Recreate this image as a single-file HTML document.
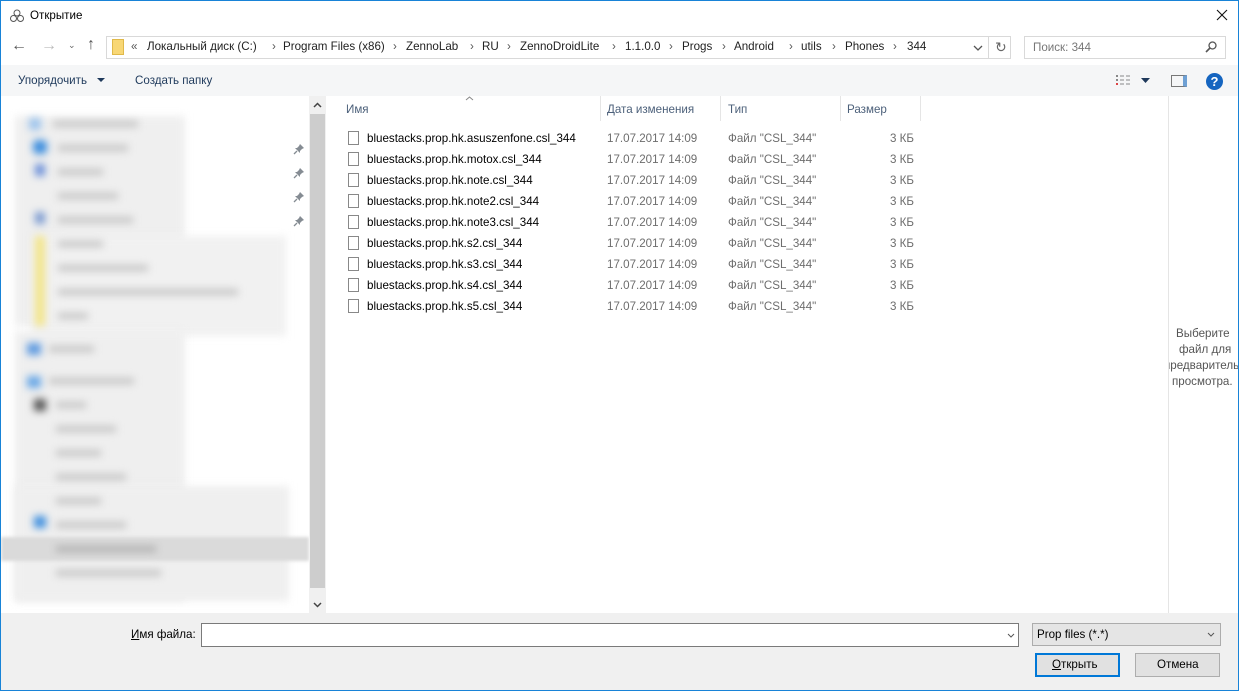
<!DOCTYPE html>
<html><head><meta charset="utf-8"><style>
*{box-sizing:border-box;margin:0;padding:0}
body{width:1239px;height:691px;overflow:hidden;background:#fff;font-family:"Liberation Sans",sans-serif;font-size:11.6px;color:#000;position:relative}
.abs{position:absolute}
.win{position:absolute;left:0;top:0;width:1239px;height:691px;border:1px solid #1883d7}
.t{white-space:nowrap}
.blur{filter:blur(4px)}
.row{position:absolute;left:0;height:21px;width:100%}
.row span{position:absolute;top:4px;white-space:nowrap}
.fi{position:absolute;left:348px;top:3px;width:11px;height:14px;border:1px solid #888;background:#fff}
.g{color:#6d6d6d}
.ad{position:absolute;top:40px;white-space:nowrap;color:#222}
.sep{position:absolute;top:40px;color:#555}
</style></head><body>
<div class="win"></div>
<svg class="abs" style="left:9px;top:8px" width="16" height="16" viewBox="0 0 16 16"><circle cx="8" cy="5" r="3" fill="none" stroke="#555"/><circle cx="4.5" cy="10.5" r="3" fill="none" stroke="#555"/><circle cx="11.5" cy="10.5" r="3" fill="none" stroke="#555"/></svg>
<div class="abs t" style="left:30px;top:9px">Открытие</div>
<svg class="abs" style="left:1216px;top:9px" width="12" height="12"><path d="M1 1L11 11M11 1L1 11" stroke="#111" stroke-width="1.1"/></svg>
<div class="abs" style="left:11px;top:37px;font-size:16px;color:#555">←</div>
<div class="abs" style="left:41px;top:37px;font-size:16px;color:#bbb">→</div>
<div class="abs" style="left:68px;top:40px;font-size:9px;color:#666">⌄</div>
<div class="abs" style="left:87px;top:36px;font-size:16px;color:#555">↑</div>
<div class="abs" style="left:106px;top:36px;width:905px;height:23px;border:1px solid #d9d9d9"></div>
<div class="abs" style="left:988px;top:37px;width:1px;height:21px;background:#d9d9d9"></div>
<div class="abs" style="left:112px;top:39px;width:12px;height:16px;background:#f8d775;border:1px solid #e0b94a"></div>
<div class="sep" style="left:131px">«</div>
<div class="ad" style="left:147px">Локальный диск (C:)</div><div class="sep" style="left:272px">›</div>
<div class="ad" style="left:283px">Program Files (x86)</div><div class="sep" style="left:393px">›</div>
<div class="ad" style="left:406px">ZennoLab</div><div class="sep" style="left:470px">›</div>
<div class="ad" style="left:482px">RU</div><div class="sep" style="left:507px">›</div>
<div class="ad" style="left:520px">ZennoDroidLite</div><div class="sep" style="left:612px">›</div>
<div class="ad" style="left:625px">1.1.0.0</div><div class="sep" style="left:669px">›</div>
<div class="ad" style="left:682px">Progs</div><div class="sep" style="left:722px">›</div>
<div class="ad" style="left:734px">Android</div><div class="sep" style="left:789px">›</div>
<div class="ad" style="left:801px">utils</div><div class="sep" style="left:832px">›</div>
<div class="ad" style="left:845px">Phones</div><div class="sep" style="left:893px">›</div>
<div class="ad" style="left:907px">344</div>
<svg class="abs" style="left:973px;top:45px" width="10" height="6"><path d="M1 1L5 5L9 1" fill="none" stroke="#555" stroke-width="1.3"/></svg>
<div class="abs" style="left:995px;top:39px;font-size:14px;color:#666">↻</div>
<div class="abs" style="left:1024px;top:36px;width:202px;height:23px;border:1px solid #d9d9d9"></div>
<div class="abs t" style="left:1033px;top:41px;color:#777">Поиск: 344</div>
<svg class="abs" style="left:1205px;top:41px" width="12" height="12"><circle cx="7.5" cy="4.5" r="3.5" fill="none" stroke="#555" stroke-width="1.3"/><path d="M5 7L1 11" stroke="#555" stroke-width="1.6"/></svg>
<div class="abs" style="left:1px;top:65px;width:1237px;height:31px;background:#f5f6f7"></div>
<div class="abs t" style="left:18px;top:74px;color:#1e395b">Упорядочить</div>
<svg class="abs" style="left:97px;top:78px" width="8" height="5"><path d="M0 0H8L4 4Z" fill="#1e395b"/></svg>
<div class="abs t" style="left:135px;top:74px;color:#1e395b">Создать папку</div>
<svg class="abs" style="left:1116px;top:74px" width="18" height="13"><g fill="#888"><rect x="0" y="1" width="2" height="2"/><rect x="0" y="5" width="2" height="2"/><rect x="0" y="9" width="2" height="2" fill="#d44"/><rect x="4" y="1.5" width="4" height="1"/><rect x="10" y="1.5" width="4" height="1"/><rect x="4" y="5.5" width="4" height="1"/><rect x="10" y="5.5" width="4" height="1"/><rect x="4" y="9.5" width="4" height="1"/><rect x="10" y="9.5" width="4" height="1"/></g></svg>
<svg class="abs" style="left:1141px;top:78px" width="9" height="5"><path d="M0 0H9L4.5 5Z" fill="#1e395b"/></svg>
<div class="abs" style="left:1171px;top:75px;width:16px;height:12px;border:1px solid #777;border-right:4px solid #6ea0d4"></div>
<div class="abs" style="left:1206px;top:73px;width:17px;height:17px;border-radius:50%;background:#1565c0;color:#fff;font-weight:bold;font-size:13px;text-align:center;line-height:17px">?</div>
<!-- sidebar -->
<div class="abs" style="left:1px;top:96px;width:308px;height:517px;overflow:hidden">
 <div class="abs blur" style="left:14px;top:20px;width:170px;height:210px;background:#efefef"></div>
 <div class="abs blur" style="left:30px;top:140px;width:255px;height:100px;background:#f1f1f1"></div>
 <div class="abs blur" style="left:14px;top:235px;width:170px;height:270px;background:#efefef"></div>
 <div class="abs blur" style="left:14px;top:390px;width:274px;height:115px;background:#efefef"></div>
 <div class="abs" style="left:0;top:441px;width:308px;height:24px;background:#dadada;filter:blur(1.5px)"></div>
 <div class="abs blur" style="left:28px;top:22px;width:12px;height:12px;background:#9cc3ec"></div>
 <div class="abs blur" style="left:32px;top:44px;width:14px;height:14px;background:#3d8ede;border-radius:4px"></div>
 <div class="abs blur" style="left:34px;top:68px;width:10px;height:12px;background:#6a8fd8"></div>
 <div class="abs blur" style="left:34px;top:116px;width:10px;height:12px;background:#7a9ad0"></div>
 <div class="abs blur" style="left:34px;top:140px;width:10px;height:90px;background:#f3e58a"></div>
 <div class="abs blur" style="left:26px;top:247px;width:14px;height:12px;background:#5e9ae0"></div>
 <div class="abs blur" style="left:26px;top:280px;width:14px;height:12px;background:#6aa8e6"></div>
 <div class="abs blur" style="left:33px;top:303px;width:12px;height:12px;background:#555"></div>
 <div class="abs blur" style="left:33px;top:420px;width:12px;height:12px;background:#3d8ede"></div>
 <div class="abs blur" style="left:52px;top:25px;width:85px;height:6px;background:#c4c4c4"></div>
 <div class="abs blur" style="left:57px;top:49px;width:70px;height:6px;background:#c4c4c4"></div>
 <div class="abs blur" style="left:57px;top:73px;width:45px;height:6px;background:#c4c4c4"></div>
 <div class="abs blur" style="left:57px;top:97px;width:60px;height:6px;background:#c4c4c4"></div>
 <div class="abs blur" style="left:57px;top:121px;width:75px;height:6px;background:#c4c4c4"></div>
 <div class="abs blur" style="left:57px;top:145px;width:45px;height:6px;background:#c4c4c4"></div>
 <div class="abs blur" style="left:57px;top:169px;width:90px;height:6px;background:#c4c4c4"></div>
 <div class="abs blur" style="left:57px;top:193px;width:180px;height:6px;background:#c4c4c4"></div>
 <div class="abs blur" style="left:57px;top:217px;width:30px;height:6px;background:#c4c4c4"></div>
 <div class="abs blur" style="left:48px;top:250px;width:45px;height:6px;background:#c4c4c4"></div>
 <div class="abs blur" style="left:48px;top:282px;width:85px;height:6px;background:#c4c4c4"></div>
 <div class="abs blur" style="left:55px;top:306px;width:30px;height:6px;background:#c4c4c4"></div>
 <div class="abs blur" style="left:55px;top:330px;width:60px;height:6px;background:#c4c4c4"></div>
 <div class="abs blur" style="left:55px;top:354px;width:45px;height:6px;background:#c4c4c4"></div>
 <div class="abs blur" style="left:55px;top:378px;width:70px;height:6px;background:#c4c4c4"></div>
 <div class="abs blur" style="left:55px;top:402px;width:45px;height:6px;background:#c4c4c4"></div>
 <div class="abs blur" style="left:55px;top:426px;width:70px;height:6px;background:#c4c4c4"></div>
 <div class="abs blur" style="left:55px;top:450px;width:100px;height:6px;background:#b0b0b0"></div>
 <div class="abs blur" style="left:55px;top:474px;width:105px;height:6px;background:#c4c4c4"></div>
</div>
<svg class="abs" style="left:293px;top:143px" width="12" height="12"><path d="M7 1L11 5L9 6L7 8L7 10L2 5L4 5L6 3Z" fill="#858c93"/><path d="M4 8L1 11" stroke="#858c93" stroke-width="1.3"/></svg>
<svg class="abs" style="left:293px;top:167px" width="12" height="12"><path d="M7 1L11 5L9 6L7 8L7 10L2 5L4 5L6 3Z" fill="#858c93"/><path d="M4 8L1 11" stroke="#858c93" stroke-width="1.3"/></svg>
<svg class="abs" style="left:293px;top:191px" width="12" height="12"><path d="M7 1L11 5L9 6L7 8L7 10L2 5L4 5L6 3Z" fill="#858c93"/><path d="M4 8L1 11" stroke="#858c93" stroke-width="1.3"/></svg>
<svg class="abs" style="left:293px;top:215px" width="12" height="12"><path d="M7 1L11 5L9 6L7 8L7 10L2 5L4 5L6 3Z" fill="#858c93"/><path d="M4 8L1 11" stroke="#858c93" stroke-width="1.3"/></svg>
<!-- scrollbar -->
<div class="abs" style="left:309px;top:96px;width:17px;height:517px;background:#f0f0f0"></div>
<div class="abs" style="left:310px;top:114px;width:15px;height:474px;background:#cdcdcd"></div>
<svg class="abs" style="left:313px;top:102px" width="9" height="6"><path d="M1 5L4.5 1.5L8 5" fill="none" stroke="#444" stroke-width="1.5"/></svg>
<svg class="abs" style="left:313px;top:602px" width="9" height="6"><path d="M1 1L4.5 4.5L8 1" fill="none" stroke="#444" stroke-width="1.5"/></svg>
<!-- header -->
<svg class="abs" style="left:465px;top:96px" width="9" height="5"><path d="M1 4L4.5 1L8 4" fill="none" stroke="#888"/></svg>
<div class="abs t" style="left:346px;top:103px;color:#4c607a">Имя</div>
<div class="abs" style="left:600px;top:96px;width:1px;height:25px;background:#e5e5e5"></div>
<div class="abs t" style="left:607px;top:103px;color:#4c607a">Дата изменения</div>
<div class="abs" style="left:720px;top:96px;width:1px;height:25px;background:#e5e5e5"></div>
<div class="abs t" style="left:728px;top:103px;color:#4c607a">Тип</div>
<div class="abs" style="left:840px;top:96px;width:1px;height:25px;background:#e5e5e5"></div>
<div class="abs t" style="left:847px;top:103px;color:#4c607a">Размер</div>
<div class="abs" style="left:920px;top:96px;width:1px;height:25px;background:#e5e5e5"></div>
<div class="abs" style="left:1168px;top:96px;width:1px;height:517px;background:#e5e5e5"></div>
<div class="abs" style="left:0;top:128px;width:1239px">
<div class="row" style="top:0"><div class="fi"></div><span style="left:367px">bluestacks.prop.hk.asuszenfone.csl_344</span><span class="g" style="left:607px">17.07.2017 14:09</span><span class="g" style="left:728px">Файл "CSL_344"</span><span class="g" style="left:890px">3 КБ</span></div>
<div class="row" style="top:21px"><div class="fi"></div><span style="left:367px">bluestacks.prop.hk.motox.csl_344</span><span class="g" style="left:607px">17.07.2017 14:09</span><span class="g" style="left:728px">Файл "CSL_344"</span><span class="g" style="left:890px">3 КБ</span></div>
<div class="row" style="top:42px"><div class="fi"></div><span style="left:367px">bluestacks.prop.hk.note.csl_344</span><span class="g" style="left:607px">17.07.2017 14:09</span><span class="g" style="left:728px">Файл "CSL_344"</span><span class="g" style="left:890px">3 КБ</span></div>
<div class="row" style="top:63px"><div class="fi"></div><span style="left:367px">bluestacks.prop.hk.note2.csl_344</span><span class="g" style="left:607px">17.07.2017 14:09</span><span class="g" style="left:728px">Файл "CSL_344"</span><span class="g" style="left:890px">3 КБ</span></div>
<div class="row" style="top:84px"><div class="fi"></div><span style="left:367px">bluestacks.prop.hk.note3.csl_344</span><span class="g" style="left:607px">17.07.2017 14:09</span><span class="g" style="left:728px">Файл "CSL_344"</span><span class="g" style="left:890px">3 КБ</span></div>
<div class="row" style="top:105px"><div class="fi"></div><span style="left:367px">bluestacks.prop.hk.s2.csl_344</span><span class="g" style="left:607px">17.07.2017 14:09</span><span class="g" style="left:728px">Файл "CSL_344"</span><span class="g" style="left:890px">3 КБ</span></div>
<div class="row" style="top:126px"><div class="fi"></div><span style="left:367px">bluestacks.prop.hk.s3.csl_344</span><span class="g" style="left:607px">17.07.2017 14:09</span><span class="g" style="left:728px">Файл "CSL_344"</span><span class="g" style="left:890px">3 КБ</span></div>
<div class="row" style="top:147px"><div class="fi"></div><span style="left:367px">bluestacks.prop.hk.s4.csl_344</span><span class="g" style="left:607px">17.07.2017 14:09</span><span class="g" style="left:728px">Файл "CSL_344"</span><span class="g" style="left:890px">3 КБ</span></div>
<div class="row" style="top:168px"><div class="fi"></div><span style="left:367px">bluestacks.prop.hk.s5.csl_344</span><span class="g" style="left:607px">17.07.2017 14:09</span><span class="g" style="left:728px">Файл "CSL_344"</span><span class="g" style="left:890px">3 КБ</span></div>
</div>
<div class="abs" style="left:1169px;top:326px;width:69px;overflow:hidden;color:#555;line-height:16px;white-space:nowrap">
<div style="padding-left:7px">Выберите</div><div style="padding-left:10px">файл для</div><div style="margin-left:-5px">предварительн</div><div style="padding-left:3px">просмотра.</div></div>
<div class="abs" style="left:1px;top:613px;width:1237px;height:77px;background:#f0f0f0"></div>
<div class="abs t" style="left:131px;top:628px"><u>И</u>мя файла:</div>
<div class="abs" style="left:201px;top:623px;width:818px;height:24px;background:#fff;border:1px solid #7a7a7a"></div>
<svg class="abs" style="left:1007px;top:633px" width="8" height="5"><path d="M1 1L4 4L7 1" fill="none" stroke="#555"/></svg>
<div class="abs" style="left:1032px;top:623px;width:189px;height:23px;background:#e5e5e5;border:1px solid #acacac"></div>
<div class="abs t" style="left:1037px;top:628px">Prop files (*.*)</div>
<svg class="abs" style="left:1207px;top:632px" width="8" height="5"><path d="M1 1L4 4L7 1" fill="none" stroke="#555"/></svg>
<div class="abs" style="left:1035px;top:653px;width:85px;height:24px;background:#e1e1e1;border:2px solid #0078d7"></div>
<div class="abs t" style="left:1052px;top:658px"><u>О</u>ткрыть</div>
<div class="abs" style="left:1135px;top:653px;width:85px;height:24px;background:#e1e1e1;border:1px solid #adadad"></div>
<div class="abs t" style="left:1157px;top:658px">Отмена</div>
</body></html>
